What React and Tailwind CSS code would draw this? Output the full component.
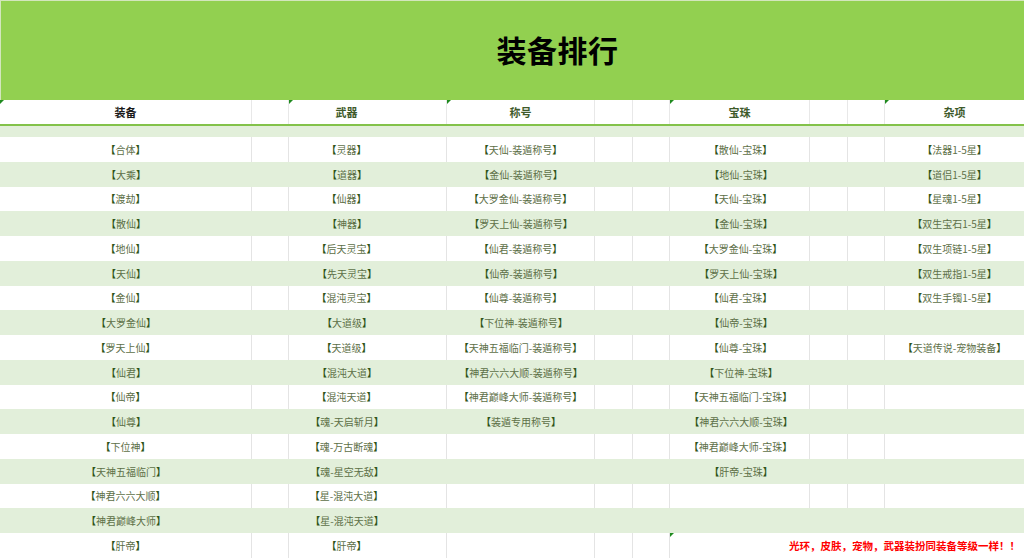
const widths = [252, 37, 158, 148, 38, 37, 140, 38, 37, 139];
const gridCols = 'grid grid-cols-[252px_37px_158px_148px_38px_37px_140px_38px_37px_139px]';

const colA = ['合体', '大乘', '渡劫', '散仙', '地仙', '天仙', '金仙', '大罗金仙', '罗天上仙', '仙君', '仙帝', '仙尊', '下位神', '天神五福临门', '神君六六大顺', '神君巅峰大师', '肝帝'];
const colC = ['灵器', '道器', '仙器', '神器', '后天灵宝', '先天灵宝', '混沌灵宝', '大道级', '天道级', '混沌大道', '混沌天道', '魂-天启斩月', '魂-万古断魂', '魂-星空无敌', '星-混沌大道', '星-混沌天道', '肝帝'];
const colD = ['天仙-装遁称号', '金仙-装遁称号', '大罗金仙-装遁称号', '罗天上仙-装遁称号', '仙君-装遁称号', '仙帝-装遁称号', '仙尊-装遁称号', '下位神-装遁称号', '天神五福临门-装遁称号', '神君六六大顺-装遁称号', '神君巅峰大师-装遁称号', '装遁专用称号'];
const colG = ['散仙-宝珠', '地仙-宝珠', '天仙-宝珠', '金仙-宝珠', '大罗金仙-宝珠', '罗天上仙-宝珠', '仙君-宝珠', '仙帝-宝珠', '仙尊-宝珠', '下位神-宝珠', '天神五福临门-宝珠', '神君六六大顺-宝珠', '神君巅峰大师-宝珠', '肝帝-宝珠'];
const colJ = ['法器1-5星', '道侣1-5星', '星魂1-5星', '双生宝石1-5星', '双生项链1-5星', '双生戒指1-5星', '双生手镯1-5星', '', '天道传说-宠物装备'];

const font = { fontFamily: '"Noto Sans CJK SC", "Noto Sans", sans-serif' };

function Item({ text }) {
  if (!text) return null;
  return (
    <span className="whitespace-nowrap text-[10px] text-[#5d6f47]">
      <span className="font-bold text-[#2f5418]">【</span>
      {text}
      <span className="font-bold text-[#2f5418]">】</span>
    </span>
  );
}

function Marker() {
  return (
    <span className="absolute left-0 top-0 h-0 w-0 border-r-[4px] border-t-[4px] border-r-transparent border-t-[#1f8a1f]" />
  );
}

function Row({ index }) {
  const green = index % 2 === 1;
  const line = green ? '' : 'border-r border-[#e4e4e4]';
  const bg = green ? 'bg-[#e2efda]' : 'bg-white';
  const last = index === 16;
  const cells = [
    <Item text={colA[index]} />,
    null,
    <Item text={colC[index]} />,
    <Item text={colD[index]} />,
    null,
    null,
    <Item text={colG[index]} />,
    null,
    null,
    <Item text={colJ[index]} />,
  ];
  return (
    <div className={`${gridCols} h-[24.75px] ${bg}`}>
      {widths.map((w, i) => {
        if (last && i >= 6) {
          if (i > 6) return null;
          return (
            <div key={i} className="relative col-span-4 flex items-center justify-end pr-[4px]">
              <Marker />
              <span className="whitespace-nowrap text-[10.5px] font-bold text-[#ff0000]">
                光环，皮肤，宠物，武器装扮同装备等级一样！！
              </span>
            </div>
          );
        }
        return (
          <div
            key={i}
            className={`flex items-center justify-center ${i === 9 ? '' : line} ${i === 2 ? 'pr-[42px]' : ''} ${i === 6 ? 'pl-[2px]' : ''}`}
          >
            {cells[i]}
          </div>
        );
      })}
    </div>
  );
}

export default function App() {
  const headers = { 0: '装备', 2: '武器', 3: '称号', 6: '宝珠', 9: '杂项' };
  const markers = [0, 2, 3, 6, 9];
  return (
    <div className="h-[558px] w-[1024px] overflow-hidden bg-white" style={font}>
      <div className="flex h-[100px] items-center justify-center border-t border-l border-[#d3e6bd] bg-[#92d050] pl-[90px] pb-[2px]">
        <h1 className="text-[30px] font-bold tracking-[0.5px] text-black">装备排行</h1>
      </div>
      <div className={`${gridCols} h-[26px] border-b-2 border-[#83c24a] bg-white`}>
        {widths.map((w, i) => (
          <div
            key={i}
            className={`relative flex items-center justify-center ${i === 9 ? '' : 'border-r border-[#e8e8e8]'} ${i === 2 ? 'pr-[42px]' : ''}`}
          >
            {markers.includes(i) && <Marker />}
            {headers[i] && (
              <span className={`text-[11px] font-bold ${i === 0 ? 'text-[#1a1a1a]' : 'text-[#3e5a2a]'}`}>
                {headers[i]}
              </span>
            )}
          </div>
        ))}
      </div>
      <div className="h-[11px] bg-[#e2efda]" />
      {colA.map((_, i) => (
        <Row key={i} index={i} />
      ))}
    </div>
  );
}
